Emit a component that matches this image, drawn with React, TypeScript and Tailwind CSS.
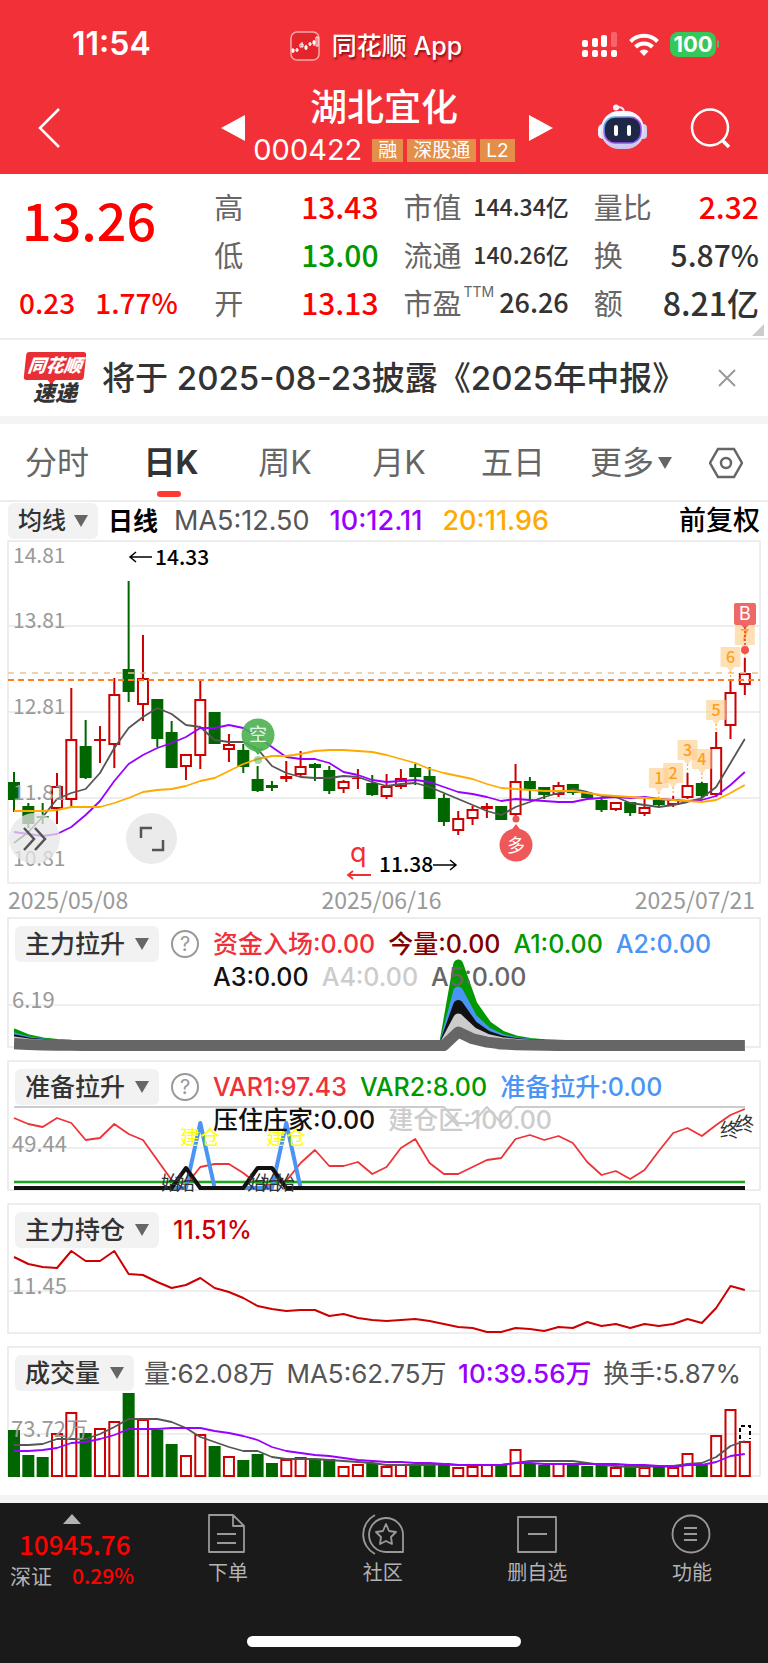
import React from "react";

type Candle = [number, number, number, number];

const din = "font-['Noto_Sans_CJK_SC',sans-serif]";
const ui = "font-['Inter','Noto_Sans_CJK_SC',sans-serif]";

// centre of the n-th trading day on every chart
const dayX = (i: number) => 7 + 14.33 * i;

const toPoints = (ys: number[]) => ys.map((y, i) => `${dayX(i)},${y}`).join(" ");

// high, body top, body bottom, low
const candles: Candle[] = [
    [232, 242, 260, 272], [263, 266, 284, 288], [263, 276, 278, 284], [233, 246, 269, 284],
    [148, 199, 260, 266], [180, 206, 238, 239], [186, 199, 201, 223], [138, 154, 205, 228],
    [41, 129, 152, 162], [95, 138, 165, 181], [159, 159, 199, 207], [181, 192, 228, 228],
    [214, 214, 227, 240], [139, 159, 216, 229], [172, 172, 204, 204], [194, 204, 210, 222],
    [204, 210, 227, 233], [226, 239, 251, 252], [241, 245, 248, 251], [221, 236, 239, 242],
    [211, 226, 235, 237], [223, 224, 228, 241], [226, 230, 251, 254], [240, 241, 249, 253],
    [229, 238, 239, 249], [235, 243, 255, 256], [234, 246, 257, 259], [229, 238, 247, 249],
    [224, 228, 237, 245], [227, 236, 259, 259], [254, 258, 282, 286], [271, 278, 291, 295],
    [266, 269, 279, 285], [263, 266, 269, 278], [266, 266, 280, 280], [224, 241, 275, 277],
    [237, 241, 249, 259], [247, 247, 255, 259], [242, 245, 255, 257], [244, 244, 253, 255],
    [252, 253, 258, 259], [259, 260, 270, 272], [262, 262, 270, 271], [262, 262, 273, 276],
    [259, 267, 274, 276], [259, 260, 265, 266], [256, 259, 265, 267], [233, 245, 258, 259],
    [242, 243, 256, 258], [192, 207, 255, 257], [139, 152, 186, 199], [118, 133, 145, 155],
];
const upDays = [3, 4, 6, 7, 9, 12, 13, 15, 19, 20, 23, 24, 26, 27, 31, 32, 33, 35, 38, 42, 44, 46, 47, 49, 50, 51];

const ma5 = [303, 292, 277, 259, 253, 249, 233, 208, 188, 177, 168, 174, 185, 187, 200, 202, 202, 209, 226, 233, 237, 238, 238, 236, 237, 242, 246, 244, 243, 247, 253, 259, 265, 271, 275, 267, 262, 257, 253, 249, 252, 256, 257, 263, 265, 267, 265, 262, 258, 247, 223, 199];
const ma10 = [292, 294, 296, 294, 287, 275, 261, 241, 224, 215, 208, 203, 197, 188, 188, 185, 188, 197, 207, 217, 219, 219, 223, 232, 235, 240, 242, 241, 240, 242, 247, 252, 254, 257, 261, 259, 260, 261, 262, 262, 259, 258, 257, 258, 257, 259, 260, 261, 260, 256, 245, 232];
const ma20 = [271, 271, 271, 270, 267, 267, 267, 263, 258, 252, 250, 249, 246, 241, 238, 231, 224, 219, 216, 216, 214, 211, 210, 210, 211, 212, 215, 219, 223, 229, 233, 236, 239, 244, 248, 249, 250, 251, 251, 251, 253, 255, 256, 257, 258, 259, 260, 261, 262, 260, 253, 245];

const var1 = [58, 64, 67, 58, 63, 80, 78, 64, 74, 80, 100, 120, 125, 107, 104, 104, 113, 124, 125, 121, 103, 90, 106, 106, 102, 114, 107, 88, 79, 103, 114, 114, 107, 100, 98, 79, 75, 80, 76, 83, 102, 115, 111, 119, 110, 91, 73, 68, 76, 65, 55, 49];
const holding = [54, 61, 64, 65, 48, 58, 58, 48, 71, 72, 79, 85, 82, 75, 85, 89, 95, 103, 106, 108, 107, 107, 113, 111, 115, 117, 118, 117, 116, 118, 121, 124, 125, 129, 129, 125, 126, 128, 124, 125, 119, 123, 121, 125, 121, 123, 121, 116, 120, 105, 83, 87];

const volume = [47, 22, 20, 44, 65, 44, 49, 56, 84, 58, 47, 33, 22, 43, 31, 21, 17, 23, 14, 18, 20, 18, 18, 11, 13, 14, 11, 13, 13, 14, 14, 10, 11, 13, 12, 28, 14, 12, 14, 12, 11, 12, 10, 12, 10, 10, 10, 24, 12, 42, 68, 36];
const volMa5 = [32, 32, 33, 38, 38, 38, 43, 50, 58, 58, 58, 55, 49, 40, 35, 30, 26, 26, 20, 18, 18, 18, 17, 16, 15, 14, 12, 12, 12, 12, 13, 12, 12, 12, 12, 14, 16, 16, 16, 16, 14, 12, 11, 10, 10, 11, 11, 13, 14, 20, 31, 36];
const volMa10 = [26, 26, 27, 29, 34, 35, 38, 42, 48, 48, 48, 49, 49, 49, 46, 44, 41, 37, 30, 26, 24, 22, 21, 19, 17, 16, 15, 15, 14, 14, 13, 12, 12, 12, 12, 14, 14, 13, 13, 13, 13, 13, 13, 12, 12, 11, 10, 12, 12, 15, 21, 23];

// the A1..A5 series all decay by half each day after a spike
const spikeY = (k: number, i: number) => {
    const lift = k * 2 * Math.pow(0.5, i) + (i >= 31 ? k * 13.5 * Math.pow(0.5, i - 31) : 0);
    return 128.5 - lift;
};
const spikePoints = (k: number) => candles.map((_, i) => `${dayX(i)},${spikeY(k, i)}`).join(" ");
const spikeLayers: [number, string][] = [[6, "#009900"], [4, "#4a94f5"], [3, "#111"], [2, "#ccc"]];

const tags = [
    { day: 45, y: 228, label: "1" },
    { day: 46, y: 223, label: "2" },
    { day: 47, y: 200, label: "3" },
    { day: 48, y: 209, label: "4" },
    { day: 49, y: 160, label: "5" },
    { day: 50, y: 107, label: "6" },
    { day: 51, y: 85, label: "7" },
];

const Frame = ({ height, lines }: { height: number; lines: number[] }) => (
    <g fill="none" stroke="#e8e8e8" strokeWidth="1.5">
        <rect x="1" y="1" width="752" height={height - 2} />
        {lines.map((y) => <line key={y} x1="1" x2="753" y1={y} y2={y} />)}
    </g>
);

const Caret = ({ className = "" }: { className?: string }) => (
    <svg viewBox="0 0 14 12" className={`w-3.5 h-3 shrink-0 ${className}`} aria-hidden="true">
        <path d="M0 0h14L7 12z" fill="currentColor" />
    </svg>
);

const StatusBar = () => (
    <div className="grid grid-cols-[1fr_auto_1fr] items-center h-[88px]">
        <span className="pl-[72px] text-[32px] leading-8 font-semibold">11:54</span>
        <div className="flex items-center gap-3 pr-4 pt-1">
            <svg viewBox="0 0 30 30" className="w-[30px] h-[30px]" aria-hidden="true">
                <rect x="1" y="1" width="28" height="28" rx="6" fill="#e3262c" stroke="#fff" strokeOpacity=".6" strokeWidth="1.5" />
                <g fill="#fff" stroke="#fff" strokeWidth="1">
                    <path d="M3 18v4M7 17v4M12 11v5M16 14v5M20 11v4M24 9v6" />
                    <path d="M2 18h2v3H2zM15 15h2v3h-2zM23 10h2v3h-2z" />
                    <path fill="none" d="M6 18h2v2H6zM10 13h3v3h-3zM19 12h2v2h-2zM26 6h2v9h-2z" />
                </g>
            </svg>
            <span className="text-[25px] leading-8 font-medium [text-shadow:1px_2px_2px_rgba(90,0,0,0.7)]">同花顺 App</span>
        </div>
        <div className="flex items-center justify-end gap-[11px] pr-[49px]">
            <svg viewBox="0 0 36 25" className="w-9 h-[25px]" fill="#fff" aria-hidden="true">
                <rect x="0" y="8" width="6" height="7" rx="2" />
                <rect x="10" y="6" width="6" height="9" rx="2" />
                <rect x="19" y="3" width="6" height="12" rx="2" />
                <rect x="29" y="0" width="6" height="15" rx="2" opacity=".25" />
                <rect x="0" y="18" width="6" height="7" rx="2" />
                <rect x="10" y="18" width="6" height="7" rx="2" />
                <rect x="19" y="18" width="6" height="7" rx="2" />
                <rect x="29" y="18" width="6" height="7" rx="2" />
            </svg>
            <svg viewBox="0 0 30 23" className="w-[30px] h-[23px]" fill="none" stroke="#fff" strokeWidth="4" aria-hidden="true">
                <path d="M1.5 8.5a19 19 0 0 1 27 0" />
                <path d="M6.500 14a12 12 0 0 1 17 0" />
                <path d="M15 23l-4.5-4.8a6.5 6.5 0 0 1 9 0z" fill="#fff" stroke="none" />
            </svg>
            <div className="flex items-center">
                <span className="bg-[#34c759] rounded-lg w-[46px] h-[25px] text-center text-[22px] leading-[25px] font-bold">100</span>
                <span className="w-0.5 h-2 ml-px rounded-r bg-[#34c759]" />
            </div>
        </div>
    </div>
);

const Robot = () => (
    <svg viewBox="0 0 50 46" className="w-[50px] h-[46px]" aria-hidden="true">
        <defs>
            <linearGradient id="shell" x1="0" y1="0" x2="0" y2="1">
                <stop offset="0" stopColor="#fff" />
                <stop offset="1" stopColor="#c9c5ee" />
            </linearGradient>
            <linearGradient id="visor" x1="0" y1="0" x2="1" y2="1">
                <stop offset="0" stopColor="#45d3e8" />
                <stop offset="0.5" stopColor="#b04bf0" />
                <stop offset="1" stopColor="#6e5cf5" />
            </linearGradient>
        </defs>
        <path d="M18 4c5-2 8 0 8 5" fill="none" stroke="#e9e6fa" strokeWidth="2" />
        <circle cx="18" cy="3.5" r="3" fill="#f4f2ff" />
        <rect x="0" y="20" width="10" height="15" rx="5" fill="#f1effc" />
        <rect x="40" y="20" width="9" height="15" rx="4" fill="#d5d1f0" />
        <rect x="3" y="7" width="43" height="38" rx="18" fill="url(#shell)" />
        <rect x="6" y="13" width="37" height="26" rx="11" fill="#1f2747" stroke="url(#visor)" strokeWidth="1.5" />
        <rect x="16" y="21" width="4" height="11" rx="2" fill="#fff" />
        <rect x="29" y="21" width="4" height="11" rx="2" fill="#fff" />
    </svg>
);

const TitleBar = () => (
    <div className="grid grid-cols-[1fr_auto_1fr] h-[86px]">
        <div className="flex items-start justify-between pl-[37px]">
            <button type="button" aria-label="返回" className="mt-[19px]">
                <svg viewBox="0 0 24 42" className="w-6 h-[42px]" fill="none" stroke="#fff" strokeWidth="2.5">
                    <path d="M22 2L3 21l19 19" />
                </svg>
            </button>
            <button type="button" aria-label="上一只" className="mt-[27px] mr-2">
                <svg viewBox="0 0 24 26" className="w-6 h-[26px]"><path d="M24 0v26L0 13z" fill="#fff" /></svg>
            </button>
        </div>
        <div className="flex flex-col items-center w-[262px] pt-0.5">
            <h1 className="text-[37px] leading-9 font-medium">湖北宜化</h1>
            <div className="flex items-center gap-1 mt-2.5 whitespace-nowrap">
                <span className="text-[29px] leading-7 mr-1.5">000422</span>
                {["融", "深股通", "L2"].map((tag) => (
                    <span key={tag} className="bg-[#e38f49] px-1.5 h-[23px] text-[19px] leading-[23px]">{tag}</span>
                ))}
            </div>
        </div>
        <div className="flex items-start pr-9">
            <button type="button" aria-label="下一只" className="mt-[27px] ml-3.5">
                <svg viewBox="0 0 24 26" className="w-6 h-[26px]"><path d="M0 0v26l24-13z" fill="#fff" /></svg>
            </button>
            <button type="button" aria-label="智能助手" className="mt-4 ml-auto"><Robot /></button>
            <button type="button" aria-label="搜索" className="mt-5 ml-[42px]">
                <svg viewBox="0 0 42 42" className="w-[42px] h-[42px]" fill="none" stroke="#fff" strokeWidth="2.5">
                    <circle cx="20" cy="19.5" r="18" />
                    <path d="M32 32l7 7" strokeWidth="3.5" />
                </svg>
            </button>
        </div>
    </div>
);

const QuoteRow = ({ label, value, sup, className = "text-[30px] text-[#333]" }: { label: string; value: string; sup?: string; className?: string }) => (
    <div className="flex items-center justify-between h-12 whitespace-nowrap">
        <dt className="flex text-[29px] leading-8 text-[#666]">
            {label}
            {sup && <sup className={`${ui} top-0 text-[14px] leading-3 pl-0.5`}>{sup}</sup>}
        </dt>
        <dd className={`leading-8 font-medium ${className}`}>{value}</dd>
    </div>
);

const Quote = () => (
    <section className={`${din} relative grid grid-cols-[189fr_164fr_165fr_165fr] gap-x-[25px] pt-2 pr-[9px] h-[164px]`}>
        <div className="text-[#ff0000] font-medium whitespace-nowrap">
            <p className="pl-[22px] h-24 pt-1 text-[52px] leading-[66px]">13.26</p>
            <p className="flex gap-5 pl-[19px] h-12 items-center text-[28px] leading-8">
                <span>0.23</span>
                <span>1.77%</span>
            </p>
        </div>
        <dl>
            <QuoteRow label="高" value="13.43" className="text-[30px] text-[#ff0000]" />
            <QuoteRow label="低" value="13.00" className="text-[30px] text-[#009900]" />
            <QuoteRow label="开" value="13.13" className="text-[30px] text-[#ff0000]" />
        </dl>
        <dl>
            <QuoteRow label="市值" value="144.34亿" className="text-[23px] text-[#333]" />
            <QuoteRow label="流通" value="140.26亿" className="text-[23px] text-[#333]" />
            <QuoteRow label="市盈" sup="TTM" value="26.26" className="text-[27px] text-[#333]" />
        </dl>
        <dl>
            <QuoteRow label="量比" value="2.32" className="text-[30px] text-[#ff0000]" />
            <QuoteRow label="换" value="5.87%" />
            <QuoteRow label="额" value="8.21亿" className="text-[32px] text-[#333]" />
        </dl>
        <svg viewBox="0 0 12 12" className="absolute right-1 bottom-0.5 w-3 h-3" aria-hidden="true">
            <path d="M12 0v12H0z" fill="#ccc" />
        </svg>
    </section>
);

const News = () => (
    <section className="flex items-center h-[78px] border-t-2 border-[#ededed] pl-[23px] pr-8">
        <div className="flex flex-col items-center w-16 text-center font-black italic" aria-hidden="true">
            <span className="relative w-[60px] h-7 rounded-[3px] bg-[#e92f36] text-white text-[18px] leading-7 -skew-x-6">
                同花顺
                <span className="absolute left-6 -bottom-1 border-x-4 border-t-4 border-x-transparent border-t-[#e92f36]" />
            </span>
            <span className="mt-0.5 text-[22px] leading-[22px] text-[#333]">速递</span>
        </div>
        <p className="flex-1 pl-[15px] text-[33px] leading-10 font-medium text-[#333] whitespace-nowrap">
            将于 2025-08-23披露《2025年中报》
        </p>
        <button type="button" aria-label="关闭">
            <svg viewBox="0 0 18 18" className="w-[18px] h-[18px]" stroke="#999" strokeWidth="2"><path d="M1 1l16 16M17 1L1 17" /></svg>
        </button>
    </section>
);

const Tabs = () => (
    <nav className="grid grid-cols-[repeat(6,1fr)_84px] items-center justify-items-center h-[74px] pt-0.5 text-[32px] leading-10 text-[#666] border-t-8 border-[#f4f4f4] box-content">
        <button type="button">分时</button>
        <button type="button" className="relative font-bold text-[#333]">
            日K
            <span className="absolute left-3.5 -bottom-3.5 w-6 h-1.5 rounded-sm bg-[#fe3a32]" />
        </button>
        <button type="button">周K</button>
        <button type="button">月K</button>
        <button type="button">五日</button>
        <button type="button" className="flex items-center gap-1 pl-2">更多<Caret className="h-2.5" /></button>
        <button type="button" aria-label="设置">
            <svg viewBox="0 0 34 32" className="w-[34px] h-8" fill="none" stroke="#666" strokeWidth="2.5">
                <path d="M9 2h16l8 14-8 14H9L1 16z" />
                <circle cx="17" cy="16" r="5" />
            </svg>
        </button>
    </nav>
);

const IndexButton = ({ children }: { children: React.ReactNode }) => (
    <button type="button" className="flex items-center gap-2.5 shrink-0 h-9 px-2.5 rounded-md bg-[#f2f2f2] text-[25px] leading-9 font-medium text-[#333] whitespace-nowrap">
        {children}
        <Caret className="text-[#666]" />
    </button>
);

const Help = () => (
    <button type="button" aria-label="说明" className="shrink-0 mt-1 ml-3 w-7 h-7 rounded-full border-2 border-[#999] text-[#999] text-[20px] leading-6 text-center">?</button>
);

const CandleChart = () => (
    <div className="relative mx-[7px]">
        <svg viewBox="0 0 754 344" className="block w-full" role="img" aria-label="日K线图">
            <Frame height={344} lines={[86, 172, 258]} />
            {candles.map(([high, top, bottom, low], i) => {
                const up = upDays.includes(i);
                const color = up ? "#cc0000" : "#006600";
                const flat = bottom - top < 4;
                return (
                    <g key={i} stroke={color} strokeWidth="2" fill={up ? "none" : color}>
                        <path d={`M${dayX(i)} ${high}V${top}M${dayX(i)} ${bottom}V${low}`} />
                        {flat
                            ? <rect x={dayX(i) - 6} y={top} width="12" height={bottom - top} fill={color} stroke="none" />
                            : <rect x={dayX(i) - 5} y={top + 1} width="10" height={bottom - top - 2} />}
                    </g>
                );
            })}
            <path d="M1 133H753" stroke="#e3c49a" strokeWidth="1.5" strokeDasharray="6 6" />
            <path d="M1 140H753" stroke="#ff7f1f" strokeWidth="2" strokeDasharray="6 4" />
            <g fill="none" strokeWidth="1.8" strokeLinejoin="round">
                <polyline points={toPoints(ma5)} stroke="#555" />
                <polyline points={toPoints(ma10)} stroke="#9900ff" />
                <polyline points={toPoints(ma20)} stroke="#ffaa00" />
            </g>
            <g className={din} fontSize="21" fill="#999">
                <text x="6" y="23">14.81</text>
                <text x="6" y="88">13.81</text>
                <text x="6" y="174">12.81</text>
                <text x="6" y="260">11.81</text>
                <text x="6" y="326">10.81</text>
            </g>
            <g className={din} fontSize="21" fontWeight="500">
                <text x="148" y="25">14.33</text>
                <text x="372" y="332">11.38</text>
            </g>
            <g fill="none" stroke="#000" strokeWidth="1.5">
                <path d="M145 17H123M129 12l-6 5 6 5" />
                <path d="M426 325h23M443 320l6 5-6 5" />
            </g>
            <text x="343" y="322" fontSize="27" fill="#f03030" className={ui}>q</text>
            <path d="M364 335H341M346 331l-5 4 5 4" fill="none" stroke="#f03030" strokeWidth="1.8" />

            <circle cx="251" cy="195" r="16.5" fill="#4caf50" opacity=".9" />
            <path d="M245 208h12l-6 7z" fill="#4caf50" />
            <circle cx="251" cy="220" r="4" fill="#4caf50" opacity=".5" />
            <text x="251" y="201" fontSize="18" fill="#e6f6e6" textAnchor="middle" className={din}>空</text>
            <circle cx="509" cy="279" r="3.5" fill="#ee5350" />
            <path d="M503 292h12l-6-8z" fill="#ee5350" />
            <circle cx="509" cy="305" r="16.5" fill="#ee5858" />
            <text x="509" y="312" fontSize="18" fill="#fff" textAnchor="middle" className={din}>多</text>

            {tags.map(({ day, y, label }) => (
                <g key={label}>
                    <path d={`M${dayX(day)} ${y + 24}V${Math.max(candles[day][0], y + 24)}`} stroke="#ffa726" strokeWidth="1.2" strokeDasharray="2 2" />
                    <rect x={dayX(day) - 10} y={y} width="20" height="20" rx="1" fill="#fdcf8f" opacity=".65" />
                    <path d={`M${dayX(day) - 4} ${y + 20}h8l-4 5z`} fill="#fdcf8f" opacity=".65" />
                    <text x={dayX(day)} y={y + 16} fontSize="16" fontWeight="500" fill="#ff9f1a" textAnchor="middle" className={din}>{label}</text>
                </g>
            ))}
            <rect x="727" y="63" width="22" height="22" rx="2" fill="#ef6868" />
            <path d="M734 85h8l-4 4z" fill="#ef6868" />
            <path d="M738 87v20" stroke="#e53935" strokeWidth="1.5" strokeDasharray="2 2" />
            <circle cx="738" cy="110" r="4" fill="#ee5350" />
            <text x="738" y="80" fontSize="18" fill="#fff" textAnchor="middle" className={ui}>B</text>
        </svg>
        <button type="button" aria-label="展开" className="absolute left-0.5 bottom-5 flex items-center justify-center w-[51px] h-[51px] rounded-full bg-[#e6e6e6]/75">
            <svg viewBox="0 0 24 24" className="w-6 h-6" fill="none" stroke="#555" strokeWidth="2.5">
                <path d="M1 1l10 11L1 23M12 1l10 11-10 11" />
            </svg>
        </button>
        <button type="button" aria-label="全屏" className="absolute left-[119px] bottom-5 flex items-center justify-center w-[51px] h-[51px] rounded-full bg-[#ebebeb]">
            <svg viewBox="0 0 26 26" className="w-[26px] h-[26px]" fill="none" stroke="#555" strokeWidth="2.5">
                <path d="M2 12V2h11M24 14v10H13" />
            </svg>
        </button>
    </div>
);

const Panel = ({ header, children }: { header: React.ReactNode; children: React.ReactNode }) => (
    <section className="relative mx-[7px] mb-3">
        <svg viewBox="0 0 754 131" className="block w-full overflow-visible">{children}</svg>
        <div className={`${ui} absolute inset-x-0 top-[9px] flex items-start px-2`}>{header}</div>
    </section>
);

const Legend = ({ items }: { items: [string, string][] }) => (
    <p className="flex flex-wrap gap-x-[13px] pl-3.5 text-[25px] leading-[33px] pt-0.5 font-medium whitespace-nowrap">
        {items.map(([text, color]) => <span key={text} className={color}>{text}</span>)}
    </p>
);

const PullPanel = () => (
    <Panel
        header={<>
            <IndexButton>主力拉升</IndexButton>
            <Help />
            <Legend items={[
                ["资金入场:0.00", "text-[#f03038]"],
                ["今量:0.00", "text-[#800000]"],
                ["A1:0.00", "text-[#009900]"],
                ["A2:0.00", "text-[#4a94f5]"],
                ["A3:0.00", "text-[#111]"],
                ["A4:0.00", "text-[#ccc]"],
                ["A5:0.00", "text-[#666]"],
            ]} />
        </>}
    >
        <defs>
            <clipPath id="days"><rect x="7" y="0" width="731" height="140" /></clipPath>
        </defs>
        <Frame height={131} lines={[88]} />
        <g clipPath="url(#days)">
            {spikeLayers.map(([k, color]) => (
                <polygon key={k} points={`7,128 ${spikePoints(k)} 738,128`} fill={color} stroke={color} strokeWidth="10" strokeLinejoin="round" />
            ))}
            <path d={`M${dayX(30)} 134L${dayX(31)} 116l14 7 14 4 14 7z`} fill="#fff" />
            <polyline points={spikePoints(1)} fill="none" stroke="#666" strokeWidth="11" strokeLinejoin="round" />
        </g>
        <text x="5" y="91" fontSize="22" fill="#999" className={din}>6.19</text>
    </Panel>
);

const ReadyPanel = () => (
    <Panel
        header={<>
            <IndexButton>准备拉升</IndexButton>
            <Help />
            <Legend items={[
                ["VAR1:97.43", "text-[#f03038]"],
                ["VAR2:8.00", "text-[#009900]"],
                ["准备拉升:0.00", "text-[#4a94f5]"],
                ["压住庄家:0.00", "text-[#111]"],
                ["建仓区:100.00", "text-[#ccc]"],
            ]} />
        </>}
    >
        <Frame height={131} lines={[88]} />
        <g fill="none" strokeLinejoin="round">
            <path d={`M7 47H${dayX(30)}L${dayX(31)} 63H${dayX(32)}L${dayX(33)} 47 ${dayX(34)} 63 ${dayX(35)} 47H738`} stroke="#ccc" strokeWidth="2" />
            <polyline points={toPoints(var1)} stroke="#ee3338" strokeWidth="1.8" />
            <path d="M7 122H738" stroke="#7fcc7f" strokeWidth="3" />
            <path d="M7 122H738" stroke="#009900" strokeWidth="1.5" />
            <path d={`M${dayX(11)} 128H${dayX(12)}L${dayX(13)} 63 ${dayX(14)} 128M${dayX(16)} 128H${dayX(18)}L${dayX(19)} 63 ${dayX(20)} 128`} stroke="#4a94f5" strokeWidth="4" />
            <path d={`M7 128H${dayX(11)}L${dayX(12)} 108 ${dayX(13)} 128H${dayX(16)}L${dayX(17)} 108H${dayX(18)}L${dayX(19)} 128H738`} stroke="#111" strokeWidth="4" />
        </g>
        <text x="5" y="92" fontSize="22" fill="#999" className={din}>49.44</text>
        <g fontSize="19" fill="#333" className={din}>
            <text x="154" y="130">始</text>
            <text x="169" y="130">始</text>
            <text x="240" y="130">始</text>
            <text x="254" y="130">始</text>
            <text x="269" y="130">始</text>
            <text x="713" y="77">终</text>
            <text x="728" y="71">终</text>
        </g>
        <g fontSize="20" fill="#ffff00" className={din}>
            <text x="173" y="85">建仓</text>
            <text x="259" y="85">建仓</text>
        </g>
    </Panel>
);

const HoldingPanel = () => (
    <Panel
        header={<>
            <IndexButton>主力持仓</IndexButton>
            <Legend items={[["11.51%", "text-[#cc0000]"]]} />
        </>}
    >
        <Frame height={131} lines={[88]} />
        <polyline points={toPoints(holding)} fill="none" stroke="#cc0000" strokeWidth="2" strokeLinejoin="round" />
        <text x="5" y="91" fontSize="22" fill="#999" className={din}>11.45</text>
    </Panel>
);

const VolumePanel = () => (
    <Panel
        header={<>
            <IndexButton>成交量</IndexButton>
            <p className="flex flex-1 justify-between pl-2.5 pr-3 pt-0.5 text-[26px] leading-[33px] text-[#555] whitespace-nowrap">
                <span>量:62.08万</span>
                <span>MA5:62.75万</span>
                <span className="font-medium text-[#9900ff]">10:39.56万</span>
                <span>换手:5.87%</span>
            </p>
        </>}
    >
        <Frame height={131} lines={[88]} />
        {volume.map((h, i) => upDays.includes(i)
            ? <rect key={i} x={dayX(i) - 5} y={132 - h} width="10" height={h - 2} fill="none" stroke="#cc0000" strokeWidth="2" />
            : <rect key={i} x={dayX(i) - 6} y={131 - h} width="12" height={h} fill="#006600" />)}
        <path d="M733 93V80h10v13" fill="none" stroke="#000" strokeWidth="2" strokeDasharray="4 3" />
        <g fill="none" strokeWidth="1.8" strokeLinejoin="round">
            <polyline points={toPoints(volMa5.map((h) => 131 - h))} stroke="#555" />
            <polyline points={toPoints(volMa10.map((h) => 131 - h))} stroke="#9900ff" />
        </g>
        <text x="4" y="91" fontSize="22" fill="#999" className={din}>73.72万</text>
    </Panel>
);

const icons = {
    order: <path d="M2 1h24l11 11v26H2zM26 1v11h11M10 20h19M10 29h19" />,
    community: (
        <>
            <path d="M42 38V20A17 17 0 1 0 25 38z" />
            <path d="M14 1a22 22 0 0 0 0 39" />
            <path d="M25 10l3 7 7 1-5 5 1 7-6-3-6 3 1-7-5-5 7-1z" />
        </>
    ),
    remove: <path d="M2 3h38v35H2zM12 20h19" />,
    menu: (
        <>
            <circle cx="21" cy="20" r="18.5" />
            <path d="M14 14h13M14 20h13M14 26h13" />
        </>
    ),
};

const BottomItem = ({ icon, label }: { icon: React.ReactNode; label: string }) => (
    <button type="button" className="flex flex-col items-center w-20">
        <svg viewBox="0 0 43 41" className="w-[43px] h-[41px]" fill="none" stroke="#999" strokeWidth="1.8" strokeLinejoin="round" aria-hidden="true">{icon}</svg>
        <span className="mt-1.5 text-[20px] leading-6">{label}</span>
    </button>
);

const BottomBar = () => (
    <footer className="bg-[#1a1a1a] text-[#b3b3b3] h-40 flex flex-col">
        <div className="flex justify-between pt-[11px] pr-9">
            <div className={`${din} w-36 pl-2.5 whitespace-nowrap`}>
                <svg viewBox="0 0 18 10" className="block w-[18px] h-2.5 ml-[53px]" aria-hidden="true"><path d="M9 0l9 10H0z" fill="#b3b3b3" /></svg>
                <p className="pl-[9px] mt-1 text-[26px] leading-8 font-medium text-[#ff0000]">10945.76</p>
                <p className="flex gap-5 text-[21px] leading-[30px]">
                    <span>深证</span>
                    <span className="font-medium text-[#ff0000]">0.29%</span>
                </p>
            </div>
            <div className="flex flex-1 justify-between pl-11">
                <BottomItem icon={icons.order} label="下单" />
                <BottomItem icon={icons.community} label="社区" />
                <BottomItem icon={icons.remove} label="删自选" />
                <BottomItem icon={icons.menu} label="功能" />
            </div>
        </div>
        <div className="mt-auto mb-4 mx-auto w-[274px] h-[11px] rounded-full bg-white" />
    </footer>
);

const App = () => {
    return (
        <div className={`${ui} bg-white text-black`}>
            <header className="bg-[#f23038] text-white">
                <StatusBar />
                <TitleBar />
            </header>
            <Quote />
            <News />
            <Tabs />
            <div className="flex items-center h-10 border-t-2 border-[#ededed] box-border pl-2 pr-2 text-[27px] leading-9 whitespace-nowrap">
                <button type="button" className="flex items-center gap-2 h-9 px-2.5 rounded-md bg-[#f2f2f2] text-[24px] font-medium text-[#333]">
                    均线<Caret className="text-[#666]" />
                </button>
                <span className="ml-2.5 text-[25px] font-bold">日线</span>
                <span className="ml-4 text-[#555]">MA5:12.50</span>
                <span className="ml-5 font-medium text-[#9900ff]">10:12.11</span>
                <span className="ml-5 font-medium text-[#ffaa00]">20:11.96</span>
                <button type="button" className="ml-auto font-medium">前复权</button>
            </div>
            <CandleChart />
            <div className={`${din} flex justify-between h-[33px] pl-2 pr-[13px] text-[23px] leading-[30px] text-[#999]`}>
                <span>2025/05/08</span>
                <span>2025/06/16</span>
                <span>2025/07/21</span>
            </div>
            <PullPanel />
            <ReadyPanel />
            <HoldingPanel />
            <VolumePanel />
            <div className="h-2 mt-[18px] bg-[#f4f4f4]" />
            <BottomBar />
        </div>
    );
};

export default App;
